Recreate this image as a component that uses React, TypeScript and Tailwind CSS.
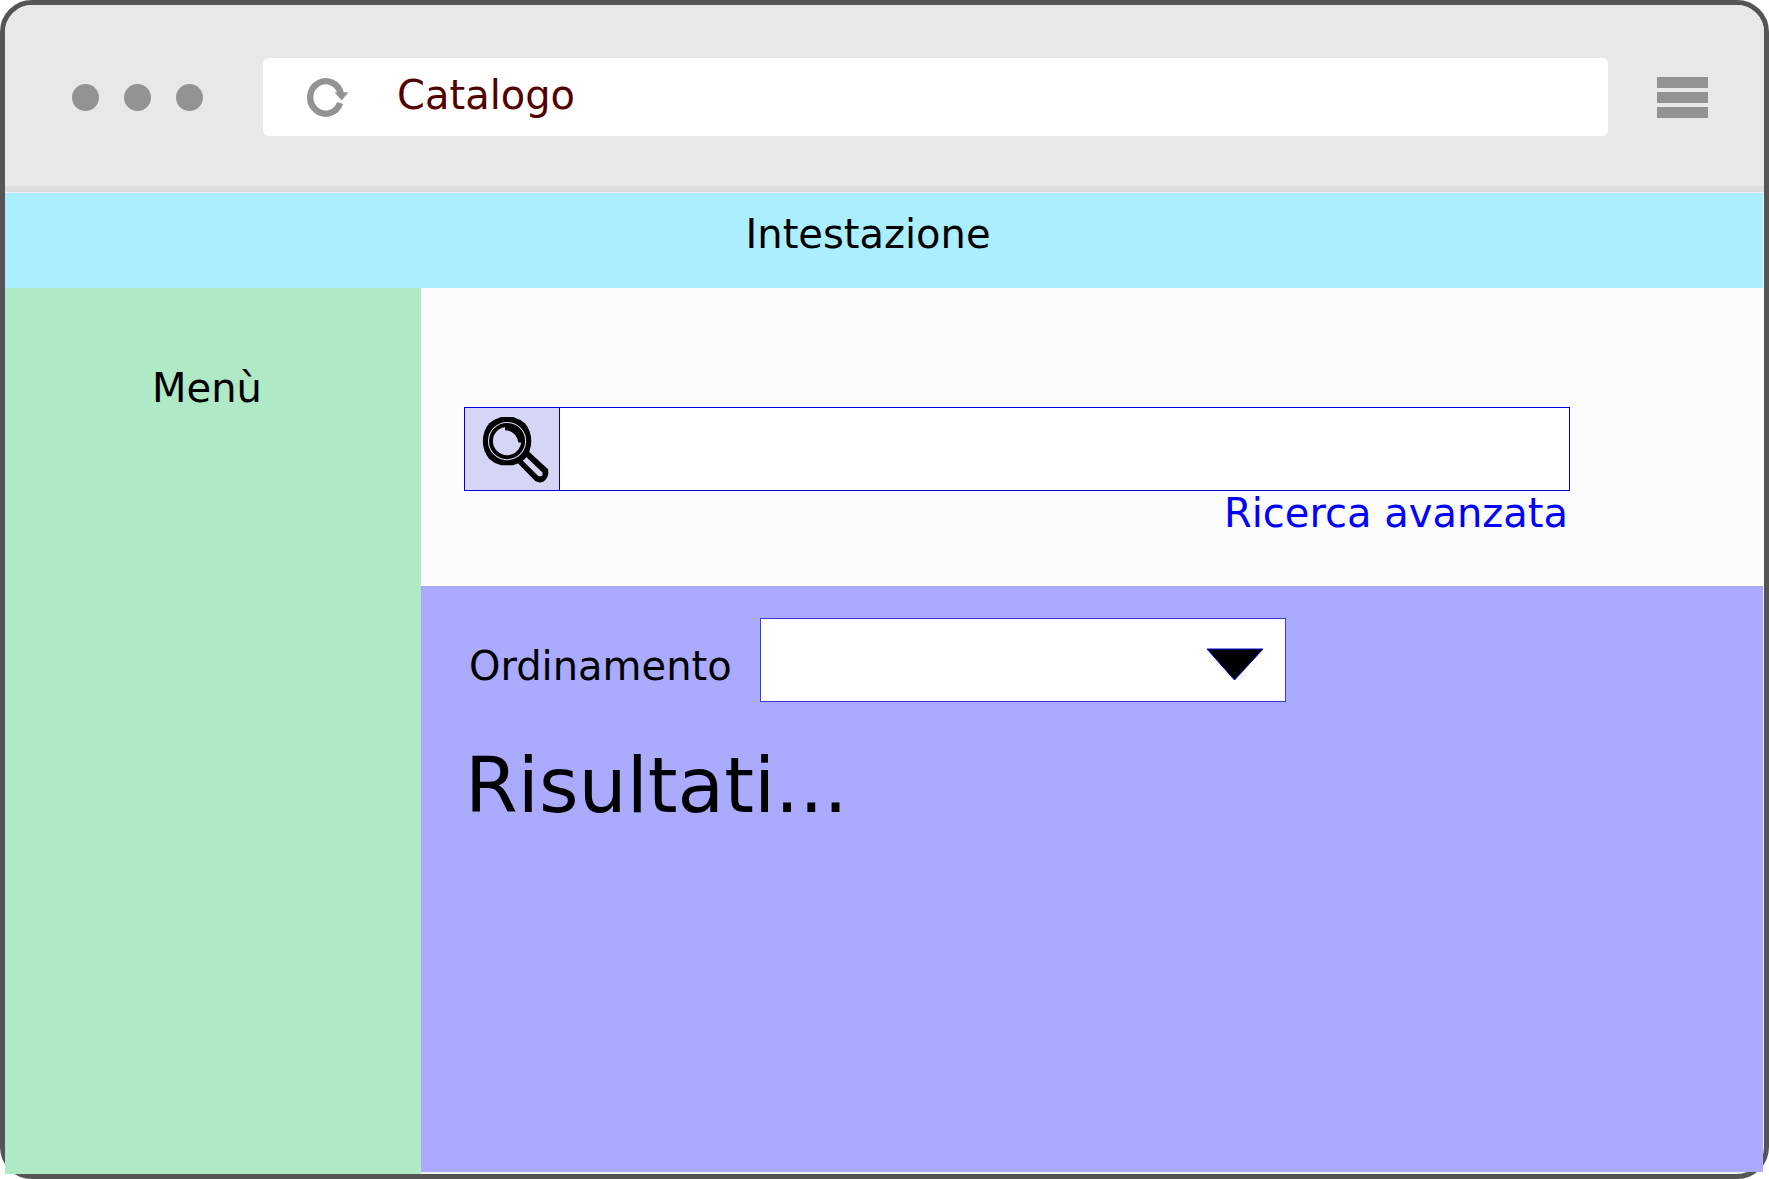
function ReloadIcon() {
  return (
    <svg viewBox="0 0 42 40" className="h-10 w-[42px]" aria-hidden="true">
      <path d="M33.2 26 A15.5 16.2 0 1 1 33.8 17" fill="none" stroke="#939393" strokeWidth="6.4" />
      <path d="M27.5 15.2 H41.5 L34.6 23.4 Z" fill="#939393" />
    </svg>
  );
}

function MagnifierIcon() {
  return (
    <svg viewBox="1 1 94 83" className="h-full w-full" aria-hidden="true">
      <path d="M65 45 L84.5 63 Q86 71 80 75.5 Q76 77.500 71.500 75 L53 56 Z" fill="#000" />
      <path d="M62.5 50.500 L78.500 66 Q80.500 71 74.500 69.800 L58.500 54 Z" fill="#d5d5f6" />
      <path
        d="M37 10 H49 Q56 12 61 16.500 Q67.500 24 67.500 34.500 Q67.500 45 61 52.500 Q56 57 49 59 H37 Q30 57 25 52.500 Q18.500 45 18.500 34.500 Q18.500 24 25 16.500 Q30 12 37 10 Z"
        fill="#000"
      />
      <circle cx="43" cy="34.5" r="18.8" fill="none" stroke="#d5d5f6" strokeWidth="1.1" />
      <circle cx="43" cy="34.5" r="14.3" fill="#d5d5f6" />
      <path d="M41 19.500 Q58 19.500 58.500 36 H54.500 Q54 31 51 28 Q47 23.500 41 23.500 Z" fill="#000" />
    </svg>
  );
}

function Toolbar() {
  return (
    <div className="flex items-center rounded-t-[27px] border-b-[6px] border-[#dddddd] bg-[#e8e8e8] pt-[53px] pr-14 pb-[50px] pl-[67px]">
      <div className="flex shrink-0 gap-[25px]">
        <span className="size-[27px] rounded-full bg-[#939393]" />
        <span className="size-[27px] rounded-full bg-[#939393]" />
        <span className="size-[27px] rounded-full bg-[#939393]" />
      </div>
      <div className="mr-[49px] ml-[60px] flex h-[78px] min-w-0 flex-1 items-center rounded-md bg-white pl-11">
        <button type="button" aria-label="Ricarica">
          <ReloadIcon />
        </button>
        <input
          type="text"
          aria-label="Indirizzo"
          defaultValue="Catalogo"
          className="ml-12 h-full min-w-0 flex-1 pb-1 text-[#550000] outline-none"
        />
      </div>
      <button type="button" aria-label="Opzioni" className="flex w-[51px] shrink-0 flex-col gap-1">
        <span className="h-[11px] bg-[#939393]" />
        <span className="h-[11px] bg-[#939393]" />
        <span className="h-[11px] bg-[#939393]" />
      </button>
    </div>
  );
}

function SearchForm() {
  return (
    <form className="flex flex-col bg-[#fcfcfc] pt-[119px] pr-[194px] pb-[53px] pl-[43px]">
      <div className="flex h-[84px]">
        <button type="button" aria-label="Cerca" className="w-24 shrink-0 border border-[#0000dd] bg-[#d5d5f6]">
          <MagnifierIcon />
        </button>
        <input
          type="search"
          aria-label="Testo da cercare"
          className="-ml-px min-w-0 flex-1 border border-[#0000dd] bg-white px-4 outline-none"
        />
      </div>
      <a href="#avanzata" className="self-end pt-0.5 pr-0.5 text-[#0000ff]">
        Ricerca avanzata
      </a>
    </form>
  );
}

function Results() {
  return (
    <section className="mr-px mb-0.5 flex-1 bg-[#aaaaff] pt-8 pl-11">
      <div className="flex items-center gap-7 pl-1">
        <label htmlFor="ordinamento" className="pt-3">
          Ordinamento
        </label>
        <div className="relative h-[84px] w-[526px]">
          <select
            id="ordinamento"
            className="h-full w-full appearance-none border border-[#3838dd] bg-white px-4 outline-none"
          >
            <option value=""></option>
          </select>
          <svg
            viewBox="0 0 58 33"
            className="pointer-events-none absolute top-[30px] right-[22px] h-[33px] w-[58px]"
            aria-hidden="true"
          >
            <path d="M1 1 H57 L28.500 32 Z" fill="#000" stroke="#0000dd" />
          </svg>
        </div>
      </div>
      <h2 className="mt-11 text-[76px] leading-20">Risultati...</h2>
    </section>
  );
}

export default function App() {
  return (
    <div className="bg-white font-['DejaVu_Sans',Verdana,sans-serif] text-[40px] leading-10 text-black">
      <div className="flex min-h-screen flex-col rounded-[32px] border-[5px] border-[#555555] bg-[#f0f0f0]">
        <Toolbar />
        <header className="mt-px mr-px h-[95px] bg-[#aaeeff] pt-[21px] pr-8 text-center">
          <h1>Intestazione</h1>
        </header>
        <div className="flex flex-1">
          <nav className="w-[416px] shrink-0 bg-[#afe9c6] pt-20 pr-3 text-center">Menù</nav>
          <main className="flex min-w-0 flex-1 flex-col">
            <SearchForm />
            <Results />
          </main>
        </div>
      </div>
    </div>
  );
}
